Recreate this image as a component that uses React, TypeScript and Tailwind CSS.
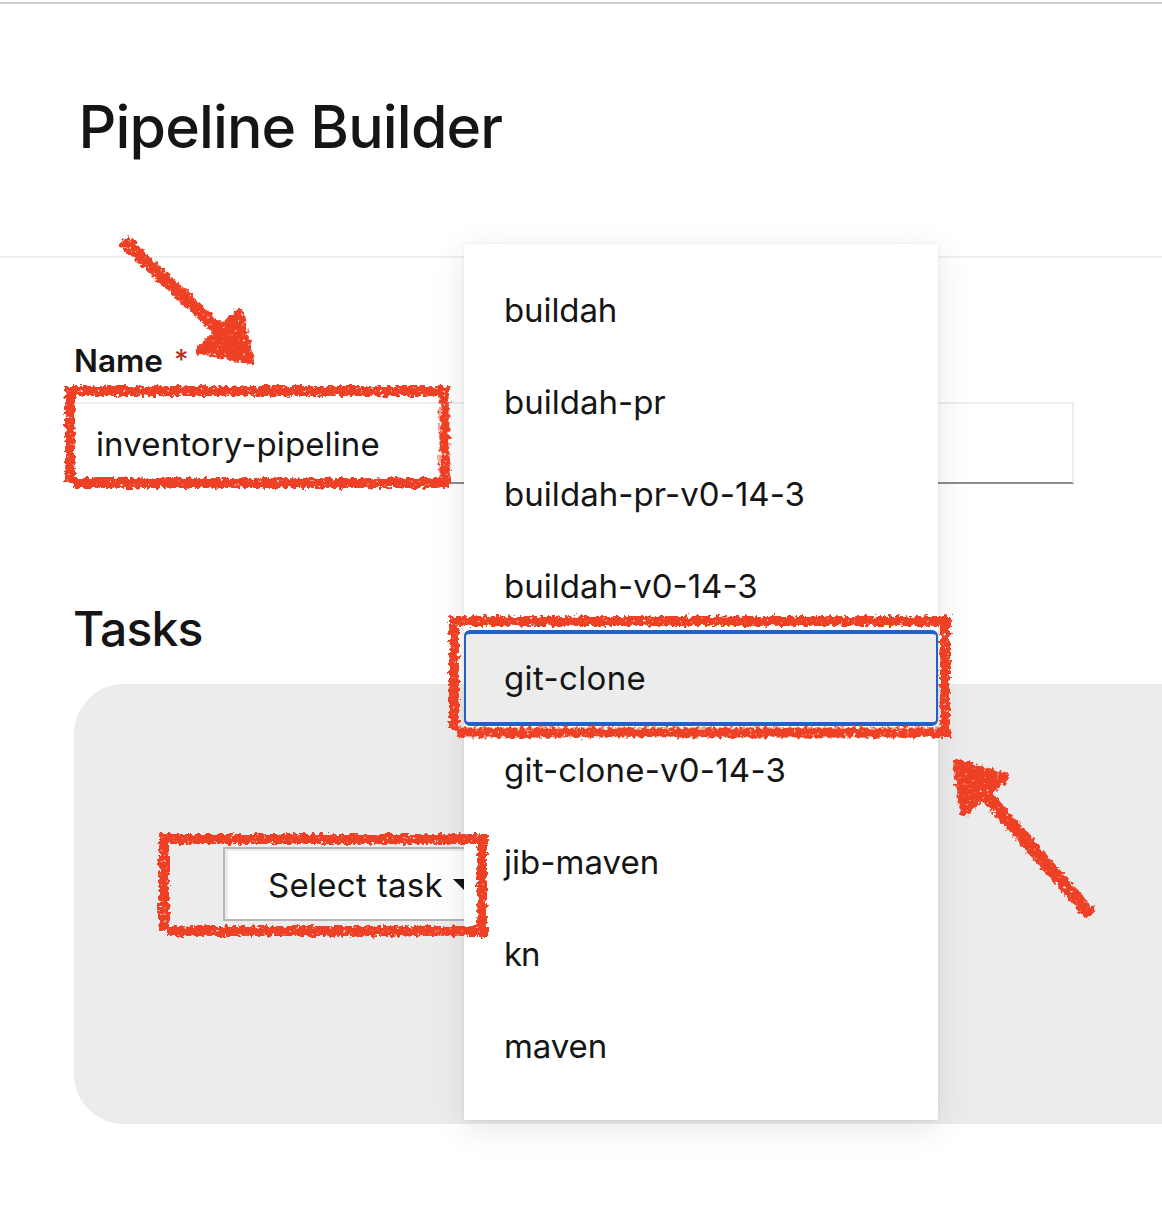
type Task = { name: string; tracking: string };

const tasks: Task[] = [
  { name: 'buildah', tracking: 'tracking-[-0.1px]' },
  { name: 'buildah-pr', tracking: 'tracking-normal' },
  { name: 'buildah-pr-v0-14-3', tracking: 'tracking-[0.05px]' },
  { name: 'buildah-v0-14-3', tracking: 'tracking-normal' },
  { name: 'git-clone', tracking: 'tracking-[0.35px]' },
  { name: 'git-clone-v0-14-3', tracking: 'tracking-[0.2px]' },
  { name: 'jib-maven', tracking: 'tracking-[0.05px]' },
  { name: 'kn', tracking: 'tracking-[-1px]' },
  { name: 'maven', tracking: 'tracking-[-0.1px]' },
];

function TaskMenu() {
  return (
    <ul className="absolute left-[464px] top-[244px] flex h-[876px] w-[474px] flex-col bg-white py-5 shadow-[0_8px_32px_rgba(3,3,3,0.1),0_0_4px_rgba(3,3,3,0.06)]">
      {tasks.map(({ name, tracking }) => (
        <li
          key={name}
          className={
            name === 'git-clone'
              ? 'relative flex h-[92px] items-center bg-[#ececec] px-10 before:absolute before:inset-x-0 before:-inset-y-0.5 before:rounded-md before:border-x-2 before:border-y-4 before:border-[#2261c7]'
              : 'flex h-[92px] items-center px-10'
          }
        >
          <span className={`text-[33px] leading-none ${tracking}`}>{name}</span>
        </li>
      ))}
    </ul>
  );
}

/** Hand-drawn chalk marks: boxes and arrows laid over the page. */
function Annotations() {
  return (
    <svg className="pointer-events-none absolute inset-0" width="1162" height="1208" viewBox="0 0 1162 1208" fill="none">
      <defs>
        <filter id="chalk" filterUnits="userSpaceOnUse" x="0" y="0" width="1162" height="1208" colorInterpolationFilters="sRGB">
          <feTurbulence type="fractalNoise" baseFrequency="0.25" numOctaves="2" seed="4" result="edge" />
          <feDisplacementMap in="SourceGraphic" in2="edge" scale="8" xChannelSelector="R" yChannelSelector="G" result="rough" />
          <feTurbulence type="fractalNoise" baseFrequency="0.3" numOctaves="2" seed="11" />
          <feColorMatrix type="matrix" values="0 0 0 0 0  0 0 0 0 0  0 0 0 0 0  -6 0 0 0 5.1" result="grain" />
          <feComposite in="rough" in2="grain" operator="in" />
        </filter>
      </defs>
      <g filter="url(#chalk)" stroke="#ed4024" strokeWidth="10">
        <path d="M65 391H450M70 386V482M444.5 386V488M73 483H450" />
        <path d="M449 621H951M454 616V730M945 616V738M457 732.5H951" />
        <path d="M159 839H488M164 834V930M482 834V937M167 931H488" />
        <path d="M123 240L226 336" strokeWidth="13" />
        <path d="M1091 915L984 793" strokeWidth="13" />
        <g fill="#ed4024" strokeWidth="8" strokeLinejoin="round">
          <path d="M239 312L200 350L250 360Z" />
          <path d="M957 763L1006 777L964 812Z" />
        </g>
      </g>
    </svg>
  );
}

export default function App() {
  return (
    <main className="relative flex h-[1208px] w-[1162px] flex-col overflow-hidden bg-white font-['Inter',sans-serif] text-[#151515]">
      <header className="mt-0.5 flex h-64 items-center border-b-2 border-t-2 border-b-[#f0f0f0] border-t-[#cccccc] pb-2 pl-[78.5px]">
        <h1 className="text-[59px] font-medium leading-none tracking-[-0.85px]">Pipeline Builder</h1>
      </header>

      <section className="flex flex-col pl-[74px] pt-[86px]">
        <label className="flex h-[34px] items-center gap-[11px] text-[31.5px] font-semibold leading-none">
          Name <span className="pb-0.5 text-[28px] font-medium text-[#b5301d]">*</span>
        </label>
        <div className="mt-6 flex h-[82px] w-[1000px] items-center border-2 border-[#ededed] border-b-[#8a8a8f] pl-5 pt-0.5">
          <span className="text-[33px] leading-none tracking-[0.12px]">inventory-pipeline</span>
        </div>
      </section>

      <section className="flex flex-col pl-[73px] pt-[121px]">
        <h2 className="text-5xl font-medium leading-none tracking-[-0.8px]">Tasks</h2>
        <div className="ml-px mt-[31px] flex h-[440px] items-center rounded-l-[50px] bg-[#ececec] pl-[149px]">
          <button className="mb-10 flex h-[74px] w-[300px] items-center border-2 border-[#b5b5ba] bg-white pl-[43px] pt-0.5 shadow-[inset_3px_2px_0_#ececec]">
            <span className="whitespace-nowrap text-[33px] leading-none tracking-[0.3px]">Select task</span>
            <svg className="ml-2.5" width="24" height="12" viewBox="0 0 24 12">
              <path d="M0 0H24L12 12Z" fill="#151515" />
            </svg>
          </button>
        </div>
      </section>

      <TaskMenu />
      <Annotations />
    </main>
  );
}
